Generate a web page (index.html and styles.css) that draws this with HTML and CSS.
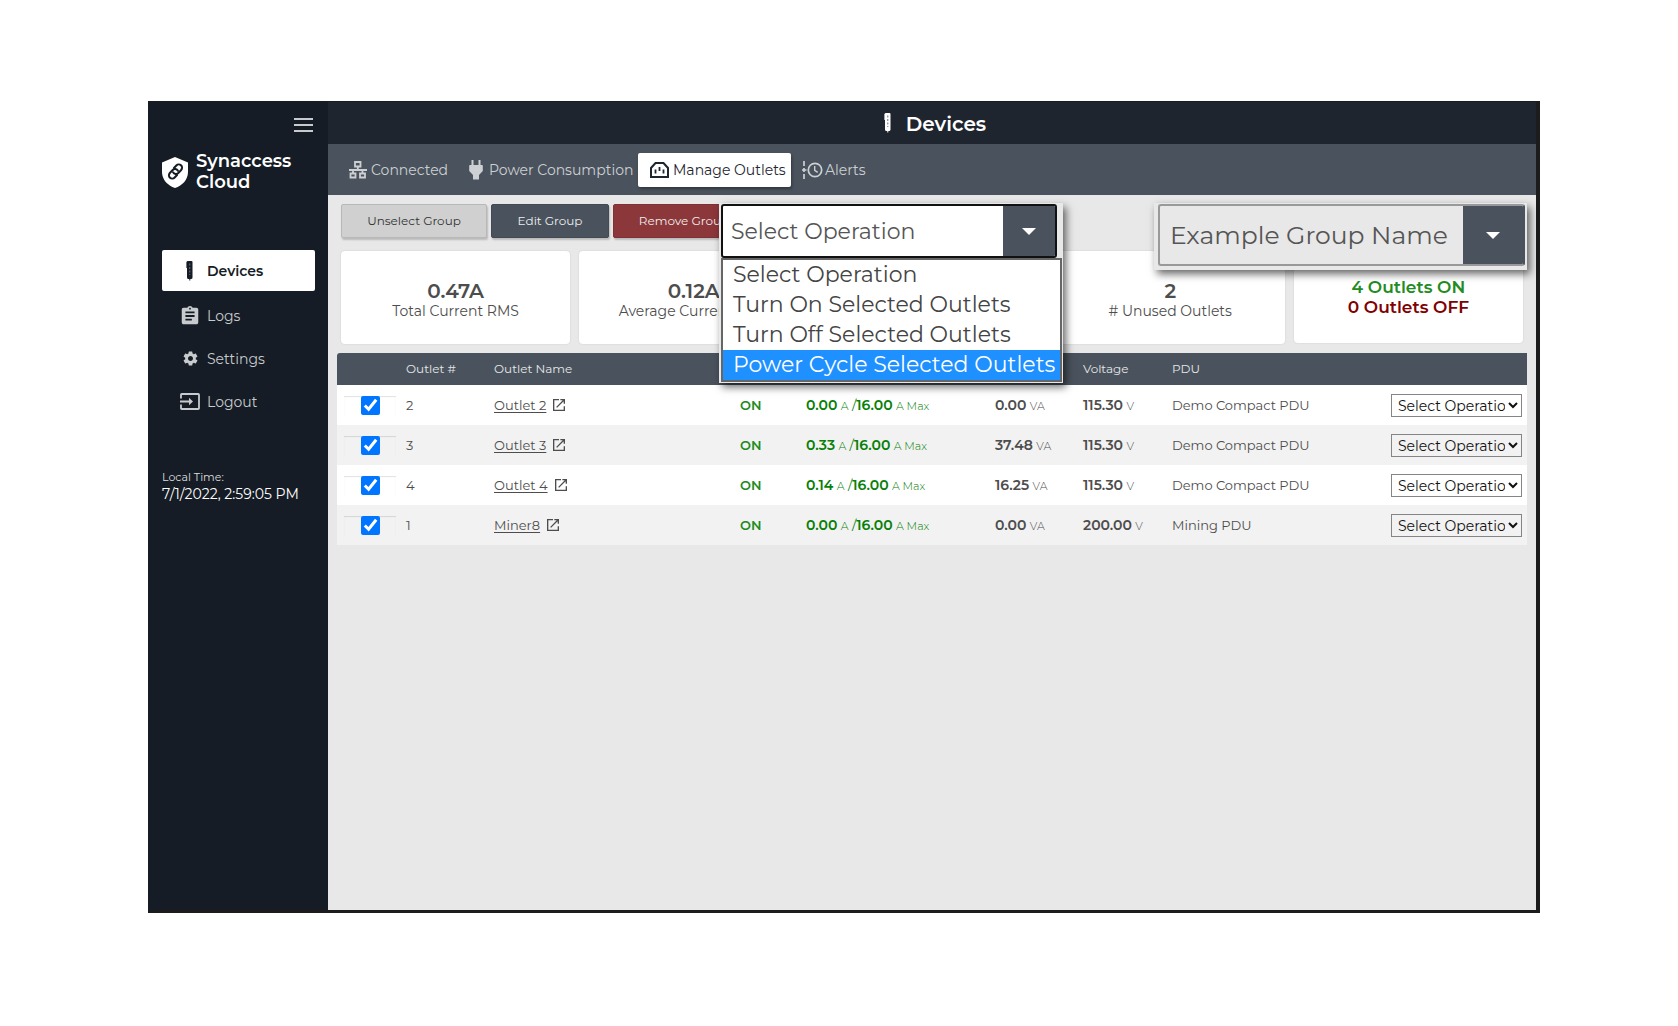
FILE: index.html
```html
<!DOCTYPE html>
<html lang="en">
<head>
<meta charset="utf-8">
<meta name="viewport" content="width=device-width, initial-scale=1">
<title>Synaccess Cloud - Devices</title>
<link rel="stylesheet" href="styles.css">
</head>
<body>
<svg class="sprite" aria-hidden="true">
  <symbol id="pdu" viewBox="0 0 8 20">
    <path fill="currentColor" d="M1.500 0h4A1 1 0 0 1 6.500 1v15.500a1.500 1.500 0 0 1-1.500 1.500h-.7v1.500h-1V18H2.500A1.500 1.500 0 0 1 1 16.500V7H.4V1z"/>
    <path class="slots" d="M3.800 2.500v11.500" stroke-width="1" stroke-dasharray="2 1.500" fill="none"/>
  </symbol>
  <symbol id="open" viewBox="0 0 24 24">
    <path fill="currentColor" d="M19 19H5V5h7V3H3v18h18v-7h-2v5zM14 3v2h3.590l-9.830 9.830 1.410 1.410L19 6.410V10h2V3h-7z"/>
  </symbol>
</svg>
<div class="app">
  <aside class="sidebar">
    <button class="menu" aria-label="Toggle menu">
      <svg width="19" height="14" viewBox="0 0 19 14" fill="currentColor"><path d="M0 0h19v2H0zM0 6h19v2H0zM0 12h19v2H0z"/></svg>
    </button>
    <div class="brand">
      <svg width="26" height="31" viewBox="0 0 26 31">
        <path fill="#fff" d="M13 0l13 5.500v9.500c0 7.500-5.500 13.500-13 16C5.500 28.500 0 22.500 0 15V5.500z"/>
        <g transform="rotate(-47 13.500 14.500)" fill="none" stroke="#151c25" stroke-width="2" stroke-linecap="round">
          <path d="M12 18H8.500a3.300 3.300 0 0 1 0-6.600h4.200a3.300 3.300 0 0 1 3 4.400"/>
          <path d="M15 11h3.500a3.300 3.300 0 0 1 0 6.600h-4.200a3.300 3.300 0 0 1-3-4.400"/>
        </g>
      </svg>
      <span>Synaccess<br>Cloud</span>
    </div>
    <nav class="nav">
      <a class="active" href="#devices"><span class="ico"><svg width="8" height="20"><use href="#pdu"/></svg></span>Devices</a>
      <a href="#logs"><span class="ico"><svg width="22" height="22" viewBox="0 0 24 24" fill="currentColor"><path d="M19 3h-4.180C14.400 1.840 13.300 1 12 1c-1.300 0-2.400.84-2.820 2H5c-1.100 0-2 .9-2 2v14c0 1.100.9 2 2 2h14c1.100 0 2-.9 2-2V5c0-1.100-.9-2-2-2zm-7 0c.55 0 1 .45 1 1s-.45 1-1 1-1-.45-1-1 .45-1 1-1zm2 14H7v-2h7v2zm3-4H7v-2h10v2zm0-4H7V7h10v2z"/></svg></span>Logs</a>
      <a href="#settings"><span class="ico"><svg width="17" height="17" viewBox="0 0 24 24" fill="currentColor"><path d="M19.430 12.980c.04-.32.07-.64.07-.98s-.03-.66-.07-.98l2.110-1.650c.19-.15.24-.42.12-.64l-2-3.460c-.12-.22-.39-.3-.61-.22l-2.490 1c-.52-.4-1.080-.73-1.690-.98l-.38-2.650C14.460 2.180 14.250 2 14 2h-4c-.25 0-.46.18-.49.42l-.38 2.650c-.61.25-1.170.59-1.690.98l-2.490-1c-.23-.09-.49 0-.61.22l-2 3.460c-.13.22-.07.49.12.64l2.110 1.650c-.04.32-.07.65-.07.98s.03.66.07.98l-2.110 1.650c-.19.15-.24.42-.12.64l2 3.460c.12.22.39.3.61.22l2.490-1c.52.4 1.080.73 1.690.98l.38 2.650c.03.24.24.42.49.42h4c.25 0 .46-.18.49-.42l.38-2.650c.61-.25 1.170-.59 1.690-.98l2.490 1c.23.09.49 0 .61-.22l2-3.460c.12-.22.07-.49-.12-.64l-2.110-1.650zM12 15.500c-1.930 0-3.500-1.570-3.500-3.500s1.570-3.500 3.500-3.500 3.500 1.570 3.500 3.500-1.570 3.500-3.500 3.500z"/></svg></span>Settings</a>
      <a href="#logout"><span class="ico"><svg width="20" height="17" viewBox="0 0 20 17"><path d="M1 5.500V1.800q0-.8.8-.8h16.400q.8 0 .8.8v13.400q0 .8-.8.8H1.800q-.8 0-.8-.8v-3.700M0 8.500h11" fill="none" stroke="currentColor" stroke-width="1.800"/><path d="M9 4.800l4 3.700-4 3.700z" fill="currentColor"/></svg></span>Logout</a>
    </nav>
    <div class="clock"><small>Local Time:</small><time>7/1/2022, 2:59:05 PM</time></div>
  </aside>

  <main class="main">
    <header class="top">
      <svg width="8" height="20"><use href="#pdu"/></svg>
      <h1>Devices</h1>
    </header>
    <nav class="tabs">
      <a href="#connected"><svg width="18" height="18" viewBox="0 0 18 18" fill="none" stroke="currentColor" stroke-width="1.800"><path d="M6 1h5.500v4.500H6zM1.500 12.500h5v4h-5zM11 12.500h5v4h-5zM8.800 5.500v3.500M0 9h18M4 9v3.500M13.500 9v3.500"/></svg>Connected</a>
      <a class="power" href="#power"><svg width="14" height="20" viewBox="0 0 14 20" fill="currentColor"><path d="M2.500 0h2v5h5V0h2v5H13q.8 0 .8.800V11l-3.800 4v4.500H4V15L.2 11V5.800Q.2 5 1 5h1.500z"/></svg>Power Consumption</a>
      <a class="active" href="#outlets"><svg width="19" height="16" viewBox="0 0 19 16" fill="none" stroke="currentColor" stroke-width="2"><path d="M1 15V6L5.500 1h8L18 6v9z"/><path d="M5.500 7.500v4M9.500 5v4M13.500 7.500v4" stroke-width="1.800"/></svg>Manage Outlets</a>
      <a class="alerts" href="#alerts"><svg width="21" height="18" viewBox="0 0 21 18" fill="none" stroke="currentColor" stroke-width="1.700"><path d="M2 0v5M2 7v4M2 13v5M0 9h4.500"/><circle cx="13" cy="9" r="6.700"/><path d="M12.700 5v4.300l3 2" stroke-width="1.400"/></svg>Alerts</a>
    </nav>

    <section class="content">
      <div class="actions">
        <button class="btn light">Unselect Group</button>
        <button class="btn edit">Edit Group</button>
        <button class="btn remove">Remove Group</button>
      </div>

      <div class="picker operation">
        <div class="combo">
          <select aria-label="Group operation"><option>Select Operation</option></select>
          <span class="arrow"></span>
        </div>
        <ul class="list" role="listbox" aria-label="Operations">
          <li role="option">Select Operation</li>
          <li role="option">Turn On Selected Outlets</li>
          <li role="option">Turn Off Selected Outlets</li>
          <li role="option" aria-selected="true">Power Cycle Selected Outlets</li>
        </ul>
      </div>
      <div class="picker group">
        <div class="combo">
          <select aria-label="Outlet group"><option>Example Group Name</option></select>
          <span class="arrow"></span>
        </div>
      </div>

      <div class="cards">
        <div class="card"><strong>0.47A</strong><span>Total Current RMS</span></div>
        <div class="card"><strong>0.12A</strong><span>Average Current RMS</span></div>
        <div class="card"></div>
        <div class="card"><strong>2</strong><span># Unused Outlets</span></div>
        <div class="card state"><b class="on">4 Outlets ON</b><b class="off">0 Outlets OFF</b></div>
      </div>

      <table class="outlets">
        <colgroup><col class="c-check"><col class="c-num"><col class="c-name"><col class="c-state"><col class="c-current"><col class="c-power"><col class="c-volt"><col><col class="c-op"></colgroup>
        <thead>
          <tr><th></th><th>Outlet #</th><th>Outlet Name</th><th></th><th></th><th></th><th>Voltage</th><th>PDU</th><th></th></tr>
        </thead>
        <tbody>
          <tr>
            <td class="check"><span><input type="checkbox" checked aria-label="Outlet 2"></span></td><td>2</td>
            <td><a href="#o2">Outlet 2</a><svg width="16" height="16"><use href="#open"/></svg></td>
            <td class="on">ON</td><td class="amps"><b>0.00</b> <small>A</small> /<b>16.00</b> <small>A Max</small></td>
            <td><b>0.00</b> <small>VA</small></td><td><b>115.30</b> <small>V</small></td><td>Demo Compact PDU</td>
            <td class="op"><select aria-label="Operation for Outlet 2"><option>Select Operation</option></select></td>
          </tr>
          <tr>
            <td class="check"><span><input type="checkbox" checked aria-label="Outlet 3"></span></td><td>3</td>
            <td><a href="#o3">Outlet 3</a><svg width="16" height="16"><use href="#open"/></svg></td>
            <td class="on">ON</td><td class="amps"><b>0.33</b> <small>A</small> /<b>16.00</b> <small>A Max</small></td>
            <td><b>37.48</b> <small>VA</small></td><td><b>115.30</b> <small>V</small></td><td>Demo Compact PDU</td>
            <td class="op"><select aria-label="Operation for Outlet 3"><option>Select Operation</option></select></td>
          </tr>
          <tr>
            <td class="check"><span><input type="checkbox" checked aria-label="Outlet 4"></span></td><td>4</td>
            <td><a href="#o4">Outlet 4</a><svg width="16" height="16"><use href="#open"/></svg></td>
            <td class="on">ON</td><td class="amps"><b>0.14</b> <small>A</small> /<b>16.00</b> <small>A Max</small></td>
            <td><b>16.25</b> <small>VA</small></td><td><b>115.30</b> <small>V</small></td><td>Demo Compact PDU</td>
            <td class="op"><select aria-label="Operation for Outlet 4"><option>Select Operation</option></select></td>
          </tr>
          <tr>
            <td class="check"><span><input type="checkbox" checked aria-label="Miner8"></span></td><td>1</td>
            <td><a href="#m8">Miner8</a><svg width="16" height="16"><use href="#open"/></svg></td>
            <td class="on">ON</td><td class="amps"><b>0.00</b> <small>A</small> /<b>16.00</b> <small>A Max</small></td>
            <td><b>0.00</b> <small>VA</small></td><td><b>200.00</b> <small>V</small></td><td>Mining PDU</td>
            <td class="op"><select aria-label="Operation for Miner8"><option>Select Operation</option></select></td>
          </tr>
        </tbody>
      </table>
    </section>
  </main>
</div>
</body>
</html>
```
FILE: styles.css
```css
* { box-sizing: border-box; }

body {
  margin: 0;
  min-height: 100vh;
  padding: 101px 138px 113px 148px;
  display: flex;
  background: #fff;
  color: #4d4d4d;
  font-family: Montserrat, Inter, sans-serif;
  font-size: 14px;
}

a { color: inherit; text-decoration: none; }
button, select { font-family: inherit; }
.sprite { position: absolute; width: 0; height: 0; }

.app {
  flex: 1;
  display: flex;
  border: solid #1c1c1c;
  border-width: 1px 4px 3px 0;
}

/* Sidebar */
.sidebar {
  flex: 0 0 180px;
  background: #151c25;
  color: #c8cbce;
  padding: 16px 13px 0 14px;
  display: flex;
  flex-direction: column;
}
.menu {
  align-self: flex-end;
  height: 14px;
  margin: 0 2px 0 0;
  padding: 0;
  border: 0;
  background: none;
  color: #c8cbce;
  display: flex;
}
.brand {
  margin-top: 19px;
  display: flex;
  align-items: center;
  gap: 8px;
  color: #fff;
  font-size: 18px;
  font-weight: 600;
  line-height: 21px;
}
.nav {
  margin-top: 57px;
  display: flex;
  flex-direction: column;
  gap: 2px;
}
.nav a {
  height: 41px;
  padding-left: 18px;
  display: flex;
  align-items: center;
  gap: 7px;
  border-radius: 2px;
}
.nav .ico {
  width: 20px;
  height: 24px;
  display: flex;
  align-items: center;
  justify-content: center;
}
.nav svg { flex: none; }
.nav .active {
  margin-bottom: 2px;
  background: #fff;
  color: #151c25;
  font-weight: 600;
}
.nav .slots { stroke: #fff; }
.clock {
  margin-top: 47px;
  display: flex;
  flex-direction: column;
  color: #fff;
  line-height: 18px;
}
.clock small { font-size: 11px; line-height: 16px; color: #dcdddf; }

/* Header and tabs */
.main { flex: 1; min-width: 0; display: flex; flex-direction: column; }
.top {
  height: 42px;
  padding-left: 6px;
  background: #1e252f;
  color: #fff;
  display: flex;
  align-items: center;
  justify-content: center;
  gap: 14px;
}
.top h1 { margin: 2px 0 0; font-size: 20px; font-weight: 600; }
.slots { stroke: #6a7077; }
.tabs {
  height: 51px;
  padding-left: 21px;
  background: #4a535d;
  color: #cdd0d3;
  display: flex;
  align-items: center;
}
.tabs a { display: flex; align-items: center; gap: 4px; width: 120px; }
.tabs .power { width: 169px; gap: 6px; }
.tabs .active {
  width: 153px;
  height: 34px;
  padding-left: 12px;
  background: #fff;
  color: #1e252f;
  border-radius: 2px;
  box-shadow: 1px 2px 3px rgba(0, 0, 0, .35);
}
.tabs .alerts { margin-left: 11px; gap: 2px; }

/* Content */
.content {
  position: relative;
  flex: 1;
  padding: 9px;
  background: #e8e8e8;
}
.actions { display: flex; gap: 4px; padding-left: 4px; }
.btn {
  height: 34px;
  padding: 0 0 2px;
  border: 1px solid #424b54;
  border-radius: 2px;
  background: #4a535d;
  color: #eee;
  font-size: 12px;
  box-shadow: 1px 2px 2px rgba(0, 0, 0, .2);
}
.light { width: 146px; background: #d0d0d0; border-color: #b8b8b8; color: #333; }
.edit { width: 118px; }
.remove { width: 142px; background: #8c373a; border-color: #7f3235; }

.cards {
  display: grid;
  grid-template-columns: repeat(5, 1fr);
  gap: 9px;
  margin: 13px 4px 9px;
}
.card {
  height: 93px;
  padding-top: 6px;
  background: #fff;
  border-radius: 4px;
  box-shadow: 0 0 2px rgba(0, 0, 0, .12);
  display: flex;
  flex-direction: column;
  align-items: center;
  justify-content: center;
  line-height: 20px;
}
.card strong { font-size: 20px; font-weight: 600; }
.card b { font-size: 17px; font-weight: 600; }
.card.state { height: 92px; padding: 0; }
.on { color: #228b22; }
.off { color: #800000; }

/* Outlet table */
.outlets {
  width: 100%;
  table-layout: fixed;
  border-collapse: separate;
  border-spacing: 0;
}
.c-check { width: 59px; }
.c-num, .c-power { width: 88px; }
.c-name { width: 246px; }
.c-state { width: 66px; }
.c-current { width: 189px; }
.c-volt { width: 89px; }
.c-op { width: 146px; }
.outlets th {
  height: 32px;
  padding: 0 0 1px 10px;
  background: #4a535d;
  color: #e4e6e8;
  font-size: 12px;
  font-weight: 400;
  text-align: left;
}
.outlets th:first-child { border-top-left-radius: 3px; }
.outlets td {
  height: 40px;
  padding: 0 0 0 10px;
  font-size: 13px;
  white-space: nowrap;
}
.outlets tbody tr { background: #fff; }
.outlets tbody tr:nth-child(even) { background: #f2f2f2; }
.outlets td a { text-decoration: underline; text-underline-offset: 2px; }
.outlets td svg { margin-left: 5px; vertical-align: -3px; }
.outlets b { font-size: 14px; font-weight: 600; }
.outlets small { font-size: 11px; font-weight: 300; }
.outlets .on { font-weight: 600; }
.outlets .amps { color: #088008; }
.outlets .check { padding: 0 0 0 7px; }
.check span {
  height: 19px;
  display: flex;
  justify-content: center;
  box-shadow: inset 0 1px 1px rgba(0, 0, 0, .12);
}
.check input { width: 19px; height: 19px; margin: 0; accent-color: #0075ff; }
.outlets .op { padding: 0 5px 0 10px; }
.op select {
  display: block;
  width: 131px;
  height: 23px;
  padding: 1px 0 0 2px;
  border: 1px solid #858585;
  border-radius: 0;
  background-color: transparent;
  color: #111;
  font-size: 14px;
}

/* Enlarged pickers laid over the page */
.picker {
  position: absolute;
  top: 8px;
  background: #e8e8e8;
  box-shadow: 3px 4px 8px rgba(0, 0, 0, .6);
}
.operation { left: 391px; width: 344px; padding: 1px 1px 1px 2px; }
.group { right: 9px; width: 373px; padding: 1px 2px 4px 4px; }
.combo {
  display: flex;
  border: 2px solid #111;
  border-radius: 3px;
  background: #fff;
  overflow: hidden;
}
.combo select {
  flex: 1;
  appearance: none;
  border: 0;
  border-radius: 0;
  background: transparent;
  color: #555;
}
.operation .combo { width: 336px; height: 54px; }
.operation select { font-size: 22px; padding: 0 0 0 8px; }
.arrow {
  width: 52px;
  background: #4a535d;
  display: flex;
  align-items: center;
  justify-content: center;
}
.arrow::before {
  content: "";
  border: solid transparent;
  border-width: 7px 7px 0;
  border-top-color: #fff;
}
.group .combo { height: 62px; background: #e8e8e8; border-color: #999; border-right-color: #4a535d; }
.group select { font-size: 25px; padding: 0 0 0 10px; }
.group .arrow { width: 60px; }
.list {
  margin: 0;
  padding: 0;
  list-style: none;
  border: 2px solid #666;
  background: #fff;
  color: #444;
  font-size: 22px;
  line-height: 30px;
  white-space: nowrap;
}
.list li { padding-left: 10px; }
.list li[aria-selected="true"] { background: #1e90ff; color: #fff; }
```
